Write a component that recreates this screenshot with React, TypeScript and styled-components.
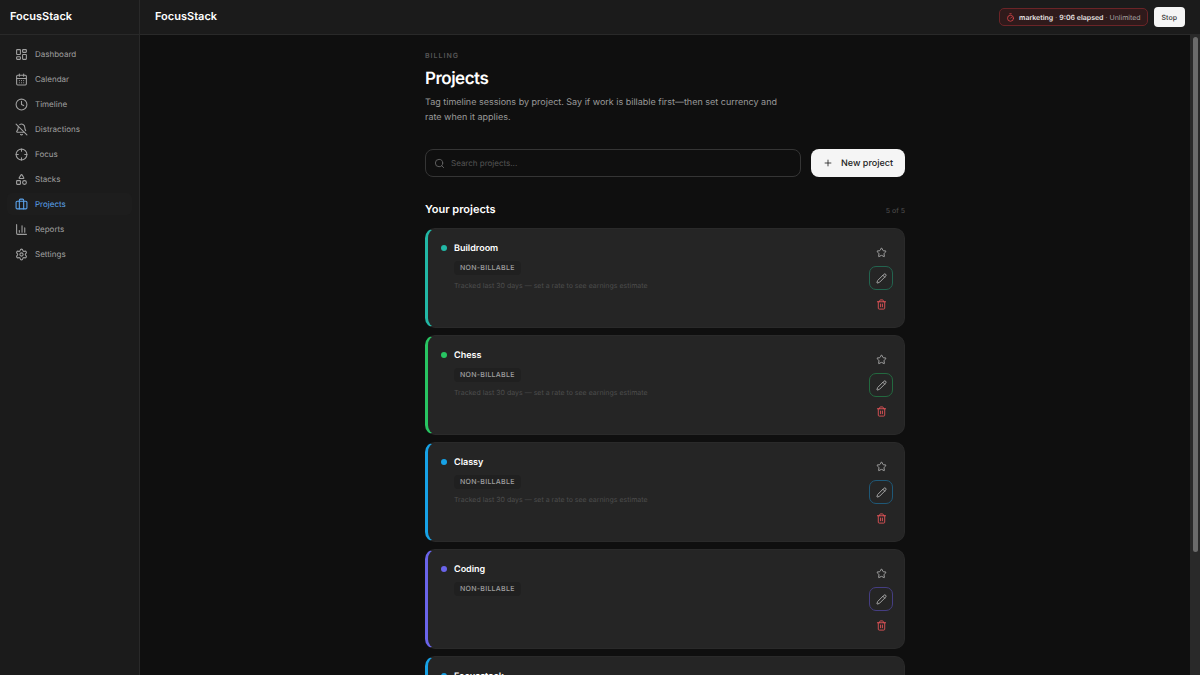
import React from "react";
import styled, { createGlobalStyle } from "styled-components";
import {
  LayoutDashboard, CalendarDays, Clock, BellOff, Crosshair, Shapes, Briefcase,
  ChartColumn, Settings, Timer, Search, Plus, Star, Pencil, Trash2,
} from "lucide-react";

const Global = createGlobalStyle`
  * { box-sizing: border-box; }
  html, body, #root { height: 100%; }
  body { margin: 0; overflow: hidden; background: #0f0f0f; color: #fff; font-family: Inter, "Liberation Sans", sans-serif; -webkit-font-smoothing: antialiased; text-rendering: geometricPrecision; }
  button, input { font: inherit; text-rendering: inherit; }
  h1, h2, h3, p { margin: 0; }
`;

const Shell = styled.div`
  display: grid;
  grid-template-columns: 140px minmax(0, 1fr);
  grid-template-rows: 35px minmax(0, 1fr);
  height: 100vh;
`;
const Brand = styled.div`
  display: flex;
  align-items: center;
  padding: 0 10px 2px;
  background: #1b1b1b;
  border-right: 1px solid #292929;
  border-bottom: 1px solid #292929;
  font-size: 11px;
  font-weight: 600;
`;
const TopBar = styled.header`
  display: flex;
  align-items: center;
  gap: 6px;
  padding: 0 15px;
  background: #1b1b1b;
  border-bottom: 1px solid #292929;
`;
const TopTitle = styled.span`
  flex: 1;
  padding-bottom: 2px;
  font-size: 11px;
  font-weight: 600;
`;
const Session = styled.div`
  display: flex;
  align-items: center;
  gap: 4px;
  height: 18px;
  padding: 0 6px;
  border: 1px solid #6b2427;
  border-radius: 5px;
  background: #2f1a1b;
  color: #a3a0a0;
  font-size: 7px;
  svg { color: #e5484d; }
  b { color: #e8e4e4; font-weight: 600; }
`;
const StopButton = styled.button`
  height: 20px;
  padding: 0 8px;
  border: 0;
  border-radius: 4px;
  background: #f5f5f5;
  color: #333;
  font-size: 7px;
  font-weight: 500;
`;
const Sidebar = styled.nav`
  display: flex;
  flex-direction: column;
  gap: 3px;
  padding: 8px 7px;
  background: #1b1b1b;
  border-right: 1px solid #292929;
`;
const NavLink = styled.a<{ $active: boolean }>`
  display: flex;
  align-items: center;
  gap: 7px;
  height: 22px;
  padding: 0 8px;
  border-radius: 5px;
  background: ${(p) => (p.$active ? "#1d1d1d" : "transparent")};
  color: ${(p) => (p.$active ? "#5ba3ec" : "#a0a0a0")};
  font-size: 8px;
  text-decoration: none;
`;
const Content = styled.main`
  display: flex;
  min-height: 0;
`;
const Scroll = styled.div`
  flex: 1;
  overflow-y: auto;
  scrollbar-width: none;
  padding: 15px 20px 0;
`;
const Track = styled.div`
  width: 10px;
  padding: 2px 2px 2px 3px;
  background: #292929;
`;
const Thumb = styled.div`
  height: 81%;
  border-radius: 3px;
  background: #6b6b6b;
`;
const Page = styled.div`
  max-width: 480px;
  margin: 0 auto;
`;
const Eyebrow = styled.p`
  color: #565656;
  font-size: 7px;
  font-weight: 600;
  line-height: 11px;
  letter-spacing: 1px;
`;
const Title = styled.h1`
  margin-top: 7px;
  font-size: 17px;
  font-weight: 600;
  line-height: 22px;
  letter-spacing: -0.03em;
`;
const Lead = styled.p`
  max-width: 360px;
  margin-top: 5px;
  color: #9a9a9a;
  font-size: 9px;
  line-height: 15px;
`;
const Tools = styled.div`
  display: flex;
  gap: 10px;
  margin-top: 24px;
`;
const SearchBox = styled.label`
  display: flex;
  flex: 1;
  align-items: center;
  gap: 6px;
  height: 28px;
  padding: 0 8px;
  border: 1px solid #353535;
  border-radius: 8px;
  color: #666;
`;
const SearchInput = styled.input`
  flex: 1;
  padding: 0;
  border: 0;
  outline: 0;
  background: transparent;
  color: #fff;
  font-size: 8px;
  &::placeholder { color: #555; opacity: 1; }
`;
const NewButton = styled.button`
  display: flex;
  align-items: center;
  gap: 8px;
  height: 28px;
  padding: 0 12px;
  border: 0;
  border-radius: 8px;
  background: #f5f5f5;
  color: #222;
  font-size: 9px;
  font-weight: 500;
`;
const ListHead = styled.div`
  display: flex;
  align-items: flex-end;
  justify-content: space-between;
  margin: 24px 0 11px;
`;
const ListTitle = styled.h2`
  font-size: 11px;
  font-weight: 600;
  line-height: 16px;
`;
const Count = styled.span`
  color: #505050;
  font-size: 7px;
  line-height: 12px;
`;
const List = styled.div`
  display: flex;
  flex-direction: column;
  gap: 7px;
`;
const Card = styled.article<{ $color: string }>`
  display: flex;
  gap: 7px;
  height: 100px;
  padding: 11px 11px 0 13px;
  border: 1px solid #2a2a2a;
  border-left: 3px solid ${(p) => p.$color};
  border-radius: 10px;
  background: #252525;
`;
const Dot = styled.span<{ $color: string }>`
  width: 6px;
  height: 6px;
  margin-top: 5px;
  border-radius: 50%;
  background: ${(p) => p.$color};
`;
const Info = styled.div`
  flex: 1;
`;
const Name = styled.h3`
  font-size: 9px;
  font-weight: 600;
  line-height: 18px;
`;
const Badge = styled.span`
  display: block;
  width: fit-content;
  margin-top: 3px;
  padding: 0 6px;
  border-radius: 4px;
  background: #202020;
  color: #a0a0a0;
  font-size: 7px;
  font-weight: 500;
  line-height: 14px;
  letter-spacing: 0.04em;
`;
const Note = styled.p`
  margin-top: 5px;
  color: #4d4d4d;
  font-size: 7px;
  line-height: 12px;
`;
const Actions = styled.div`
  display: flex;
  flex-direction: column;
  align-items: center;
  gap: 2px;
`;
const Action = styled.button<{ $tone: string; $outline?: string }>`
  display: grid;
  place-items: center;
  width: 24px;
  height: 24px;
  padding: 0;
  border: 1px solid ${(p) => p.$outline ?? "transparent"};
  border-radius: 7px;
  background: transparent;
  color: ${(p) => p.$tone};
`;

const nav = [
  { label: "Dashboard", Icon: LayoutDashboard },
  { label: "Calendar", Icon: CalendarDays },
  { label: "Timeline", Icon: Clock },
  { label: "Distractions", Icon: BellOff },
  { label: "Focus", Icon: Crosshair },
  { label: "Stacks", Icon: Shapes },
  { label: "Projects", Icon: Briefcase },
  { label: "Reports", Icon: ChartColumn },
  { label: "Settings", Icon: Settings },
];

const projects = [
  { name: "Buildroom", color: "#22b8a6", ring: "#23644f", note: true },
  { name: "Chess", color: "#28c562", ring: "#23693f", note: true },
  { name: "Classy", color: "#17a2e6", ring: "#1f5877", note: true },
  { name: "Coding", color: "#6a64ea", ring: "#453e82", note: false },
  { name: "Focusstack", color: "#17a2e6", ring: "#1f5877", note: true },
];

export default function App() {
  return (
    <Shell>
      <Global />
      <Brand>FocusStack</Brand>
      <TopBar>
        <TopTitle>FocusStack</TopTitle>
        <Session>
          <Timer size={9} />
          <span><b>marketing</b> · <b>9:06 elapsed</b> · Unlimited</span>
        </Session>
        <StopButton>Stop</StopButton>
      </TopBar>
      <Sidebar>
        {nav.map(({ label, Icon }) => (
          <NavLink key={label} href="#" $active={label === "Projects"}>
            <Icon size={13} />
            {label}
          </NavLink>
        ))}
      </Sidebar>
      <Content>
        <Scroll>
          <Page>
            <Eyebrow>BILLING</Eyebrow>
            <Title>Projects</Title>
            <Lead>Tag timeline sessions by project. Say if work is billable first—then set currency and rate when it applies.</Lead>
            <Tools>
              <SearchBox>
                <Search size={11} />
                <SearchInput type="text" aria-label="Search projects" placeholder="Search projects..." />
              </SearchBox>
              <NewButton><Plus size={10} />New project</NewButton>
            </Tools>
            <ListHead>
              <ListTitle>Your projects</ListTitle>
              <Count>5 of 5</Count>
            </ListHead>
            <List>
              {projects.map((p) => (
                <Card key={p.name} $color={p.color}>
                  <Dot $color={p.color} />
                  <Info>
                    <Name>{p.name}</Name>
                    <Badge>NON-BILLABLE</Badge>
                    {p.note && <Note>Tracked last 30 days — set a rate to see earnings estimate</Note>}
                  </Info>
                  <Actions>
                    <Action $tone="#a8a8a8" aria-label={`Favorite ${p.name}`}><Star size={11} /></Action>
                    <Action $tone="#b0b0b0" $outline={p.ring} aria-label={`Edit ${p.name}`}><Pencil size={11} /></Action>
                    <Action $tone="#e05358" aria-label={`Delete ${p.name}`}><Trash2 size={11} /></Action>
                  </Actions>
                </Card>
              ))}
            </List>
          </Page>
        </Scroll>
        <Track><Thumb /></Track>
      </Content>
    </Shell>
  );
}
